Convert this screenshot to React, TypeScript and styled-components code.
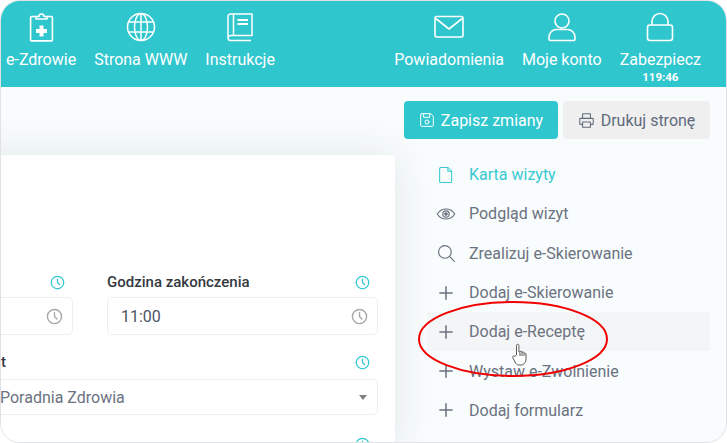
import { createGlobalStyle } from "styled-components";
import styled from "styled-components";
import { ReactNode } from "react";

const GlobalStyle = createGlobalStyle`
  html, body {
    margin: 0;
    padding: 0;
    background: #ffffff;
  }
  body {
    font-family: Roboto, "Liberation Sans", sans-serif;
  }
`;

const Line = ({ size, children, stroke = 1.6 }: { size: number; children: ReactNode; stroke?: number }) => (
  <svg
    width={size}
    height={size}
    viewBox="0 0 24 24"
    fill="none"
    stroke="currentColor"
    strokeWidth={stroke}
    strokeLinecap="round"
    strokeLinejoin="round"
  >
    {children}
  </svg>
);

const ClipboardIcon = () => (
  <svg width="30" height="30" viewBox="0 0 30 30" fill="none" stroke="currentColor" strokeWidth="1.6" strokeLinejoin="round">
    <path d="M10 4.5H5.6a1 1 0 0 0-1 1v22.4a1 1 0 0 0 1 1h19.8a1 1 0 0 0 1-1V5.500a1 1 0 0 0-1-1H21" />
    <path d="M10 7V4.500h3a2.500 2.500 0 0 1 5 0h3V7z" />
    <path d="M13.500 13.500h4v3.500h3.500v4h-3.500v3.500h-4V21H10v-4h3.500z" fill="currentColor" stroke="none" />
  </svg>
);

const GlobeIcon = () => (
  <svg width="30" height="30" viewBox="0 0 30 30" fill="none" stroke="currentColor" strokeWidth="1.5">
    <circle cx="15" cy="15" r="13.500" />
    <ellipse cx="15" cy="15" rx="6.500" ry="13.500" />
    <path d="M15 1.500v27M2.500 10h25M2.500 20h25" />
  </svg>
);

const BookIcon = () => (
  <svg width="30" height="30" viewBox="0 0 30 30" fill="none" stroke="currentColor" strokeWidth="1.5" strokeLinejoin="round">
    <path d="M3 25V4.500A2.500 2.500 0 0 1 5.500 2H27v21.500H6a3 3 0 0 0-3 3A2.500 2.500 0 0 0 5.500 28.500H26" />
    <path d="M8.500 2v21" />
    <path d="M12.500 8h10.500M12.500 12h10.500" strokeWidth="1.800" />
  </svg>
);

const MailIcon = () => (
  <svg width="30" height="30" viewBox="0 0 30 30" fill="none" stroke="currentColor" strokeWidth="1.600" strokeLinejoin="round">
    <rect x="1" y="4.500" width="28" height="20.500" rx="1.500" />
    <path d="M1.800 6.500 15 17 28.200 6.500" />
  </svg>
);

const UserIcon = () => (
  <svg width="30" height="30" viewBox="0 0 30 30" fill="none" stroke="currentColor" strokeWidth="1.600" strokeLinejoin="round">
    <circle cx="15" cy="9" r="7" />
    <path d="M9.500 17.500h11a7.500 7.500 0 0 1 7.500 7.500v2a1.500 1.500 0 0 1-1.500 1.500h-23A1.500 1.500 0 0 1 2 27v-2a7.500 7.500 0 0 1 7.500-7.500z" />
  </svg>
);

const LockIcon = () => (
  <svg width="30" height="30" viewBox="0 0 30 30" fill="none" stroke="currentColor" strokeWidth="1.600" strokeLinejoin="round">
    <rect x="2.500" y="13" width="25" height="15.500" rx="2.500" />
    <path d="M7 13V9.500a8 8 0 0 1 16 0V13" />
  </svg>
);

const SaveIcon = () => (
  <Line size={16} stroke={1.500}>
    <path d="M4 2.500h13.500L21.500 6.500V20a1.500 1.500 0 0 1-1.500 1.500H4A1.500 1.500 0 0 1 2.500 20V4A1.500 1.500 0 0 1 4 2.500z" />
    <path d="M7 2.500v5.500h9V2.500" />
    <circle cx="12" cy="15" r="3" />
  </Line>
);

const PrintIcon = () => (
  <Line size={17} stroke={1.500}>
    <path d="M6.500 9V2.500h11V9" />
    <path d="M6 17.500H3.500a1 1 0 0 1-1-1V10a1 1 0 0 1 1-1h17a1 1 0 0 1 1 1v6.500a1 1 0 0 1-1 1H18" />
    <path d="M6.500 14h11v7.500h-11z" />
  </Line>
);

const ClockIcon = ({ size }: { size: number }) => (
  <Line size={size} stroke={2}>
    <circle cx="12" cy="12" r="10" />
    <path d="M12 6.500V12l3.500 3.500" />
  </Line>
);

const FileIcon = () => (
  <Line size={18} stroke={1.400}>
    <path d="M5 2h9.500L19.500 7V20.500a1.500 1.500 0 0 1-1.500 1.500H5a1.500 1.500 0 0 1-1.500-1.500v-17A1.500 1.500 0 0 1 5 2z" />
    <path d="M14.500 2v5h5" />
  </Line>
);

const EyeIcon = () => (
  <Line size={20} stroke={1.400}>
    <path d="M1.500 12C4 8 7.500 6 12 6s8 2 10.500 6C20 16 16.500 18 12 18S4 16 1.500 12z" />
    <circle cx="12" cy="12" r="3.800" />
    <circle cx="12" cy="12" r="1.500" fill="currentColor" />
  </Line>
);

const SearchIcon = () => (
  <Line size={19} stroke={1.500}>
    <circle cx="10" cy="10" r="8" />
    <path d="M16 16l6 6" />
  </Line>
);

const PlusIcon = () => (
  <Line size={14} stroke={2.600}>
    <path d="M12 1.500v21M1.500 12h21" />
  </Line>
);

const HandIcon = () => (
  <svg width="15" height="23" viewBox="0 0 15 23" fill="#ffffff" stroke="#5b5b5b" strokeWidth="1" strokeLinejoin="round">
    <path d="M4.500 12V2.500a1.200 1.200 0 0 1 2.400 0V9l1 .1a1 1 0 0 1 2 .2l.1.500a1 1 0 0 1 2 .3l.1.600a1 1 0 0 1 1.900.3V16c0 3-1.800 6-5 6H7c-2 0-3-1-4-3L.8 14.500c-.5-1.200 1-2.300 2-1.200z" />
    <path d="M8 9.500V13M10 10v3M12 11v2" fill="none" />
  </svg>
);

const Frame = styled.div`
  position: relative;
  box-sizing: border-box;
  width: 727px;
  height: 443px;
  overflow: hidden;
  background: #f8fcfd;
  border: 1px solid #e0e2e3;
  border-radius: 20px;
`;

const Header = styled.header`
  display: flex;
  justify-content: space-between;
  box-sizing: border-box;
  height: 86px;
  padding: 11px 25px 0 5px;
  background: #30c6ce;
  color: #ffffff;
`;

const NavGroup = styled.nav`
  display: flex;
  gap: 18px;
`;

const NavItem = styled.a`
  display: flex;
  flex-direction: column;
  align-items: center;
  font-size: 16px;
  line-height: 18px;
  white-space: nowrap;

  svg {
    margin-bottom: 9px;
  }
`;

const Timer = styled.span`
  font-size: 11.5px;
  font-weight: 700;
  line-height: 12px;
  margin-top: 2px;
`;

const Toolbar = styled.div`
  display: flex;
  justify-content: flex-end;
  gap: 5px;
  padding: 14px 16px 0 0;
`;

const Button = styled.button<{ $primary?: boolean }>`
  display: flex;
  align-items: center;
  justify-content: center;
  gap: 6px;
  height: 38px;
  width: ${({ $primary }) => ($primary ? "154px" : "147px")};
  padding: 0;
  border: none;
  border-radius: 4px;
  font-family: inherit;
  font-size: 16px;
  color: ${({ $primary }) => ($primary ? "#ffffff" : "#606b7d")};
  background: ${({ $primary }) => ($primary ? "#30c6ce" : "#efefef")};
`;

const Content = styled.div`
  display: flex;
  margin-top: 16px;
`;

const Card = styled.section`
  flex: none;
  box-sizing: border-box;
  width: 610px;
  height: 300px;
  margin-left: -216px;
  padding: 117px 17px 0;
  background: #ffffff;
  border-radius: 4px;
  box-shadow: 0 0 40px rgba(40, 50, 60, 0.1);
`;

const TimeRow = styled.div`
  display: grid;
  grid-template-columns: 1fr 1fr;
  gap: 34px;
`;

const Field = styled.div`
  display: flex;
  flex-direction: column;
`;

const LabelRow = styled.div<{ $indent?: number }>`
  display: flex;
  justify-content: space-between;
  align-items: center;
  height: 20px;
  margin-bottom: 5px;
  padding-left: ${({ $indent }) => $indent ?? 0}px;
  padding-right: 8px;
  font-size: 15px;
  font-weight: 500;
  color: #35393f;
  svg {
    color: #30c6ce;
  }
`;

const Input = styled.div`
  display: flex;
  justify-content: space-between;
  align-items: center;
  box-sizing: border-box;
  height: 38px;
  padding: 0 9px 0 13px;
  background: #ffffff;
  border: 1px solid #eceeef;
  border-radius: 5px;
  font-size: 16px;
  color: #4b5563;
  svg {
    color: #a8a8a8;
  }
`;

const Select = styled(Input)<{ $indent: number }>`
  height: 36px;
  margin-top: 2px;
  padding: 0 10px 0 ${({ $indent }) => $indent}px;
  color: #6b7280;
`;

const Caret = styled.span`
  width: 0;
  height: 0;
  border-left: 4px solid transparent;
  border-right: 4px solid transparent;
  border-top: 5px solid #808080;
`;

const SelectField = styled(Field)`
  margin-top: 17px;
`;

const LastLabelRow = styled.div`
  display: flex;
  justify-content: flex-end;
  margin-top: 22px;
  padding-right: 8px;
  color: #30c6ce;
`;

const Menu = styled.ul`
  flex: none;
  width: 283px;
  margin: 0 0 0 32px;
  padding: 0;
  list-style: none;
`;

const MenuItem = styled.li<{ $active?: boolean; $hover?: boolean }>`
  display: flex;
  align-items: center;
  height: 39.3px;
  font-size: 16px;
  color: ${({ $active }) => ($active ? "#38c9d0" : "#6b7280")};
  background: ${({ $hover }) => ($hover ? "#f4f5f6" : "transparent")};
`;

const MenuIcon = styled.span`
  display: flex;
  justify-content: center;
  width: 38px;
  margin-right: 4px;
  color: inherit;
`;

const Ring = styled.svg`
  position: absolute;
  left: 416px;
  top: 299px;
  pointer-events: none;
`;

const Cursor = styled.div`
  position: absolute;
  left: 511px;
  top: 342px;
  display: flex;
`;

const menuItems: { label: string; icon: ReactNode; active?: boolean; hover?: boolean }[] = [
  { label: "Karta wizyty", icon: <FileIcon />, active: true },
  { label: "Podgląd wizyt", icon: <EyeIcon /> },
  { label: "Zrealizuj e-Skierowanie", icon: <SearchIcon /> },
  { label: "Dodaj e-Skierowanie", icon: <PlusIcon /> },
  { label: "Dodaj e-Receptę", icon: <PlusIcon />, hover: true },
  { label: "Wystaw e-Zwolnienie", icon: <PlusIcon /> },
  { label: "Dodaj formularz", icon: <PlusIcon /> },
];

const App = () => {
  return (
    <>
      <GlobalStyle />
      <Frame>
        <Header>
          <NavGroup>
            <NavItem><ClipboardIcon />e-Zdrowie</NavItem>
            <NavItem><GlobeIcon />Strona WWW</NavItem>
            <NavItem><BookIcon />Instrukcje</NavItem>
          </NavGroup>
          <NavGroup>
            <NavItem><MailIcon />Powiadomienia</NavItem>
            <NavItem><UserIcon />Moje konto</NavItem>
            <NavItem><LockIcon />Zabezpiecz<Timer>119:46</Timer></NavItem>
          </NavGroup>
        </Header>
        <Toolbar>
          <Button $primary><SaveIcon />Zapisz zmiany</Button>
          <Button><PrintIcon />Drukuj stronę</Button>
        </Toolbar>
        <Content>
          <Card>
            <TimeRow>
              <Field>
                <LabelRow>
                  Godzina rozpoczęcia
                  <ClockIcon size={15} />
                </LabelRow>
                <Input>10:30<ClockIcon size={17} /></Input>
              </Field>
              <Field>
                <LabelRow>
                  Godzina zakończenia
                  <ClockIcon size={15} />
                </LabelRow>
                <Input>11:00<ClockIcon size={17} /></Input>
              </Field>
            </TimeRow>
            <SelectField>
              <LabelRow $indent={152}>
                Gabinet
                <ClockIcon size={15} />
              </LabelRow>
              <Select $indent={197}>
                Poradnia Zdrowia
                <Caret />
              </Select>
            </SelectField>
            <LastLabelRow><ClockIcon size={15} /></LastLabelRow>
          </Card>
          <Menu>
            {menuItems.map((item) => (
              <MenuItem key={item.label} $active={item.active} $hover={item.hover}>
                <MenuIcon>{item.icon}</MenuIcon>
                {item.label}
              </MenuItem>
            ))}
          </Menu>
        </Content>
        <Ring width="192" height="78" viewBox="0 0 192 78" fill="none">
          <ellipse cx="96" cy="39" rx="94" ry="37" stroke="#f00000" strokeWidth="2" />
        </Ring>
        <Cursor><HandIcon /></Cursor>
      </Frame>
    </>
  );
};

export default App;
